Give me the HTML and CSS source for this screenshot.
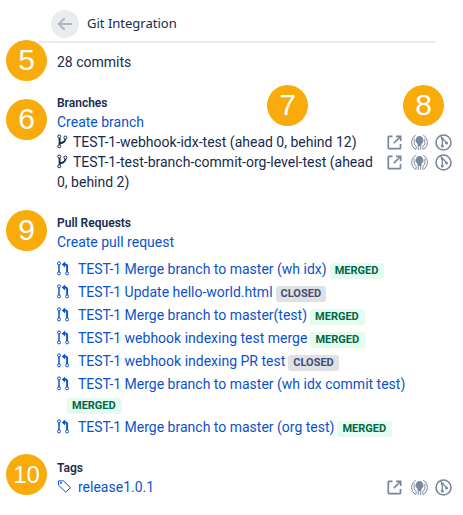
FILE: index.html
```html
<!DOCTYPE html>
<html lang="en">
<head>
<meta charset="utf-8">
<title>Git Integration</title>
<link rel="stylesheet" href="styles.css">
</head>
<body>
<svg class="defs" width="0" height="0">
  <symbol id="branch" viewBox="0 0 12 15"><g fill="none" stroke="currentColor"><circle cx="2.2" cy="2.5" r="1.5"/><circle cx="2.2" cy="12.3" r="1.5"/><circle cx="8.4" cy="3.5" r="1.5"/><path stroke-width="1.9" d="M2.6 4v6.8M2.8 9.6L6.8 8Q8.2 7.4 8.4 5"/></g></symbol>
  <symbol id="pull" viewBox="0 0 13 15"><g fill="none" stroke="currentColor"><circle cx="2" cy="2.4" r="1.5"/><circle cx="2" cy="12.4" r="1.5"/><circle cx="10.1" cy="12.4" r="1.5"/><path stroke-width="1.5" d="M2 4v6.9"/><path stroke-width="1.9" d="M7 3.4h1.5q1.6 0 1.6 1.6v5.9"/></g><path fill="currentColor" d="M8.2.4v6L4.7 3.4z"/></symbol>
  <symbol id="tag" viewBox="0 0 15 15"><path fill="none" stroke="currentColor" d="M1.5 1.9h4.9l7.1 6.7-4.6 4.6-7.4-7z"/><circle cx="3.9" cy="4" r="1" fill="currentColor"/></symbol>
  <symbol id="open" viewBox="0 0 15 15"><g fill="none" stroke="currentColor" stroke-width="1.7"><path d="M5.5 1.3H2.1q-.8 0-.8.8v10.8q0 .8.8.8h10.6q.8 0 .8-.8V9"/><path d="M6.8 8.2l6.2-6.2"/></g><path fill="currentColor" d="M9 .5h5.5V6h-1.7V2.2H9z"/></symbol>
  <symbol id="kraken" viewBox="0 0 17 17"><path fill="currentColor" d="M8.5 2c2.3 0 3.5 2 3.9 4 .3 1.6-.4 2.4-1.2 3.1-.7.6-.9 1.2-.9 1.9v1H6.7v-1c0-.7-.2-1.3-.9-1.9C5 8.4 4.3 7.6 4.6 6c.4-2 1.6-4 3.9-4z"/><g fill="none" stroke="currentColor"><path stroke-width="1" d="M4.7 1.3C-.5 4-.9 12.6 4.9 15.6M12.3 1.3c5.2 2.7 5.6 11.3-.2 14.3"/><path stroke-width=".9" d="M3.2 4.6v5.2q.5 1.6 2 2.4v3M13.8 4.6v5.2q-.5 1.6-2 2.4v3M7.3 11v5M9.7 11v5"/></g></symbol>
  <symbol id="git" viewBox="0 0 17 17"><g fill="none" stroke="currentColor"><circle cx="8.5" cy="8.5" r="7.5" stroke-width="1.6"/><path stroke-width="1.3" d="M5.5 2.2l6.1 6.7M7.3 4.5v7.4"/></g><g fill="currentColor"><circle cx="7.3" cy="12.1" r="1.5"/><circle cx="11.5" cy="9" r="1.5"/><circle cx="7.3" cy="5" r="1.3"/></g></symbol>
</svg>
<main class="panel">
  <header class="header">
    <span class="back"><svg width="16" height="14" viewBox="0 0 16 14"><path d="M15 7H2M7.5 1.2L1.8 7l5.7 5.8" fill="none" stroke="currentColor" stroke-width="2"/></svg></span>
    <h1 class="title">Git Integration</h1>
  </header>
  <p class="commits">28 commits</p>

  <section class="branches">
    <h2>Branches</h2>
    <a class="create">Create branch</a>
    <div class="row"><p class="name"><svg class="branch-icon"><use href="#branch"/></svg>TEST-1-webhook-idx-test (ahead 0, behind 12)</p><div class="actions"><svg class="open"><use href="#open"/></svg><svg><use href="#kraken"/></svg><svg><use href="#git"/></svg></div></div>
    <div class="row"><p class="name"><svg class="branch-icon"><use href="#branch"/></svg>TEST-1-test-branch-commit-org-level-test (ahead 0, behind 2)</p><div class="actions"><svg class="open"><use href="#open"/></svg><svg><use href="#kraken"/></svg><svg><use href="#git"/></svg></div></div>
  </section>

  <section class="pulls">
    <h2>Pull Requests</h2>
    <a class="create">Create pull request</a>
    <ul>
      <li><svg class="pull-icon"><use href="#pull"/></svg><a>TEST-1 Merge branch to master (wh idx)</a><span class="status merged">MERGED</span></li>
      <li><svg class="pull-icon"><use href="#pull"/></svg><a>TEST-1 Update hello-world.html</a><span class="status closed">CLOSED</span></li>
      <li><svg class="pull-icon"><use href="#pull"/></svg><a>TEST-1 Merge branch to master(test)</a><span class="status merged">MERGED</span></li>
      <li><svg class="pull-icon"><use href="#pull"/></svg><a>TEST-1 webhook indexing test merge</a><span class="status merged">MERGED</span></li>
      <li><svg class="pull-icon"><use href="#pull"/></svg><a>TEST-1 webhook indexing PR test</a><span class="status closed">CLOSED</span></li>
      <li class="long"><svg class="pull-icon"><use href="#pull"/></svg><a>TEST-1 Merge branch to master (wh idx commit test)</a><span class="status merged">MERGED</span></li>
      <li><svg class="pull-icon"><use href="#pull"/></svg><a>TEST-1 Merge branch to master (org test)</a><span class="status merged">MERGED</span></li>
    </ul>
  </section>

  <section class="tags">
    <h2>Tags</h2>
    <div class="row"><a class="name"><svg class="tag-icon"><use href="#tag"/></svg>release1.0.1</a><div class="actions"><svg class="open"><use href="#open"/></svg><svg><use href="#kraken"/></svg><svg><use href="#git"/></svg></div></div>
  </section>
</main>
<span class="callout c5">5</span>
<span class="callout c6">6</span>
<span class="callout c7">7</span>
<span class="callout c8">8</span>
<span class="callout c9">9</span>
<span class="callout c10">10</span>
</body>
</html>
```
FILE: styles.css
```css
* { box-sizing: border-box; }
body { margin: 0; background: #fff; color: #172b4d; font: 14px/20px Roboto, sans-serif; }
h1, h2, p, ul { margin: 0; padding: 0; }
.defs { display: block; }
.panel { padding-left: 57px; }
.header { display: flex; align-items: center; height: 43px; width: 397px; margin-left: -18px; padding: 5px 0 0 12px; border-bottom: 2px solid #ebebf0; }
.back { display: flex; align-items: center; justify-content: center; width: 28px; height: 28px; margin-top: 2px; border-radius: 50%; background: #ebecf0; color: #b0b5c4; }
.title { margin: 0 0 0 8px; font: 400 13px/20px "Noto Sans", sans-serif; }
.commits { margin-top: 9px; }
h2 { font-size: 12px; line-height: 20px; font-weight: 600; height: 20px; }
.branches { margin-top: 21px; }
.create, a { color: #0c52cc; }
.create { display: block; height: 20px; margin-top: -1px; }
.row { display: flex; align-items: flex-start; }
.name { width: 321px; }
.actions { display: flex; align-items: center; height: 20px; margin-left: 9px; gap: 7px; color: #7a869a; }
.actions svg { width: 17px; height: 17px; }
.actions .open { width: 15px; height: 15px; margin-right: 2px; }
.branch-icon { width: 12px; height: 15px; margin-right: 4px; vertical-align: -2px; }
.pulls { margin-top: 21px; }
ul { list-style: none; margin-top: 7px; }
li { display: flex; flex-wrap: wrap; height: 23px; width: 370px; }
.pull-icon { width: 13px; height: 15px; margin: 2px 8px 0 0; color: #0c52cc; }
.status { height: 16px; margin: 4px 0 0 3px; padding: 0 5px; border-radius: 3px; font-size: 11px; line-height: 15px; font-weight: 700; }
.merged { padding-right: 6px; background: #e3fcef; color: #006644; }
.closed { background: #dfe1e6; color: #42526e; }
.long { height: 43px; align-content: flex-start; }
.long .status { margin: 4px 100px 0 10px; }
.tags { margin-top: 18px; }
.tags .row { margin-top: -1px; }
.tag-icon { width: 15px; height: 15px; margin-right: 6px; vertical-align: -2px; }
.callout { position: absolute; display: flex; align-items: center; justify-content: center; width: 41px; height: 41px; padding-bottom: 2px; border-radius: 50%; background: #f8ab0b; color: #fff; font: 30px/39px "Liberation Sans", sans-serif; }
.c5 { left: 6px; top: 40px; }
.c6 { left: 6px; top: 99px; }
.c7 { left: 267px; top: 85px; }
.c8 { left: 403px; top: 85px; }
.c9 { left: 6px; top: 210px; }
.c10 { left: 6px; top: 454px; padding-bottom: 0; font-size: 24px; }
```
